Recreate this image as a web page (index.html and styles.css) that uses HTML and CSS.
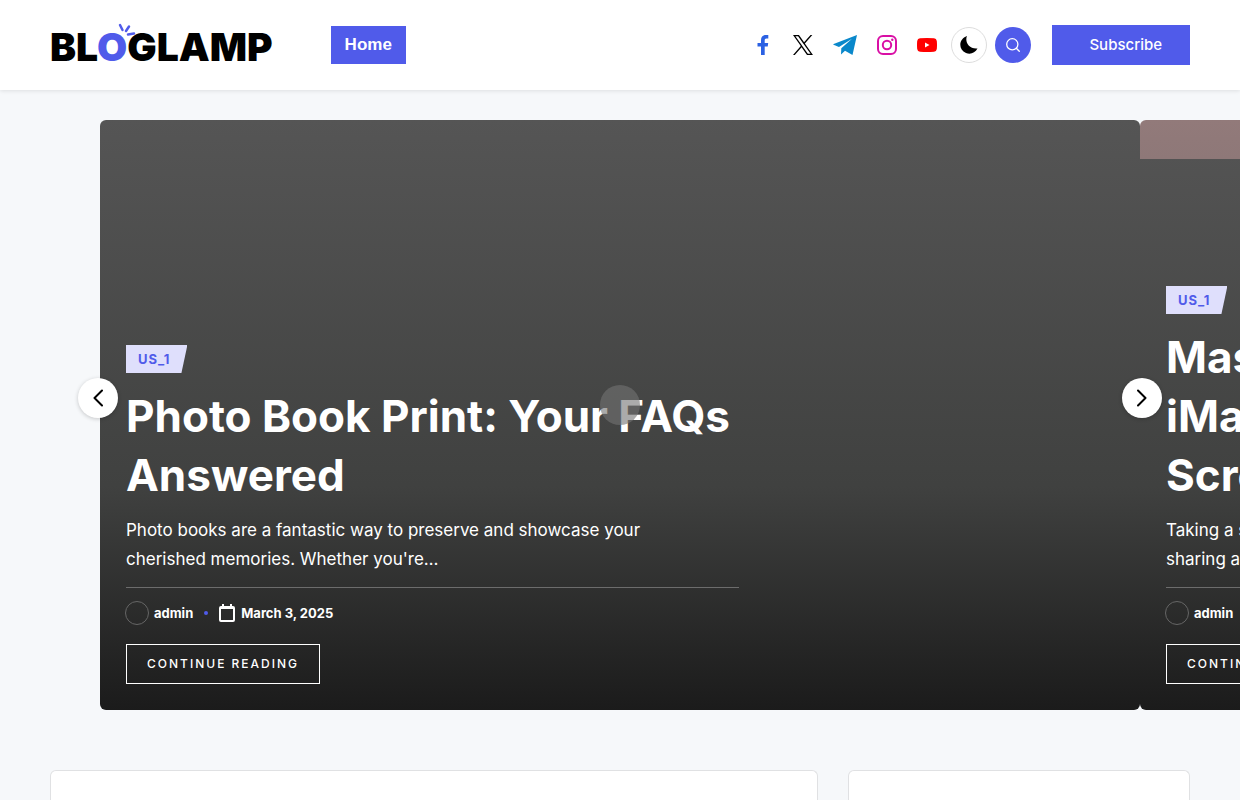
FILE: index.html
```html
<!DOCTYPE html>
<html lang="en">
<head>
    <meta charset="UTF-8">
    <meta name="viewport" content="width=device-width, initial-scale=1">
    <title>Bloglamp</title>
    <link rel="stylesheet" href="styles.css">
</head>
<body>
    <header class="site-header">
        <a class="logo" href="#" aria-label="Bloglamp">BL<span class="logo-o">O<svg class="logo-rays" viewBox="0 0 18 14" aria-hidden="true"><path d="M2 2L4.500 7M11 3.500L8 8M10 11.500L16 10.500"/></svg></span>GLAMP</a>
        <nav class="main-nav">
            <a class="nav-link" href="#">Home</a>
        </nav>
        <div class="header-widgets">
            <div class="socials">
                <a href="#" aria-label="Facebook"><svg width="20" height="20" viewBox="0 0 20 20" fill="#2b61e3"><path d="M8 20V11.500H4.500V8H8V5.500C8 2 9.800 0 13 0H15.300V3.500H13.500C12 3.500 11.700 4.200 11.700 5.500V8H15.200L14.700 11.500H11.700V20Z"/></svg></a>
                <a href="#" aria-label="X"><svg width="20" height="20" viewBox="0 0 24 24" fill="#000"><path d="M14.258 10.152L23.176 0h-2.113l-7.747 8.813L7.133 0H0l9.352 13.328L0 23.973h2.113l8.176-9.309 6.531 9.309h7.133zm-2.895 3.293l-.949-1.328L2.875 1.563h3.246l6.086 8.523.945 1.328 7.910 11.078h-3.246z"/></svg></a>
                <a href="#" aria-label="Telegram"><svg width="24" height="20" viewBox="0 0 24 20" fill="#0a88cb"><path d="M24 0L0 9.300C1.200 10.200 3.400 11 6 12L19 3.800L8.300 13.300L8 19.500L12 15.700L19.500 20Z"/></svg></a>
                <a href="#" aria-label="Instagram"><svg width="20" height="20" viewBox="0 0 20 20" fill="none" stroke="#d90fa5" stroke-width="2"><rect x="1" y="1" width="18" height="18" rx="5"/><circle cx="10" cy="10" r="4.200"/><circle cx="15.300" cy="4.700" r="1.200" fill="#d90fa5" stroke="none"/></svg></a>
                <a href="#" aria-label="YouTube"><svg width="20" height="20" viewBox="0 0 20 20"><path fill="#f00" d="M3 3.300Q10 2.700 17 3.300Q19.500 3.500 19.800 6Q20.200 10 19.800 14Q19.500 16.500 17 16.700Q10 17.300 3 16.700Q.5 16.500.2 14Q-.2 10 .2 6Q.5 3.500 3 3.300Z"/><path fill="#fff" d="M8 7.500V12.500L12.500 10Z"/></svg></a>
            </div>
            <button class="round-button theme-toggle" type="button" aria-label="Dark mode"><svg width="18" height="18" viewBox="0 0 18 18"><path d="M7 0C4.500 5.500 9 13.500 17.500 12.500C15 17 10.500 18.800 6 17C-2 13.500-1.500 3 7 0Z"/></svg></button>
            <button class="round-button search-button" type="button" aria-label="Search"><svg width="14" height="14" viewBox="0 0 14 14" fill="none" stroke="#fff" stroke-width="1.300" stroke-linecap="round"><circle cx="6.300" cy="6.300" r="5.600"/><path d="M10.300 10.300L13.300 13.300"/></svg></button>
            <a class="subscribe" href="#">Subscribe</a>
        </div>
    </header>

    <section class="hero">
        <div class="slides">
            <article class="slide">
                <div class="slide-content">
                    <a class="category" href="#">US_1</a>
                    <h2 class="slide-title"><a href="#">Photo Book Print: Your FAQs Answered</a></h2>
                    <p class="excerpt">Photo books are a fantastic way to preserve and showcase your<br>cherished memories. Whether you're…</p>
                    <div class="meta">
                        <span class="avatar"></span>
                        <a class="author" href="#">admin</a>
                        <span class="dot"></span>
                        <svg class="calendar" width="16" height="18" viewBox="0 0 16 18" aria-hidden="true"><rect x="1" y="3" width="14" height="14" rx="1" fill="none" stroke="#fff" stroke-width="2"/><path d="M1 3H15V5H1ZM3 0H5V3H3ZM11 0H13V3H11Z" fill="#fff"/></svg>
                        <time datetime="2025-03-03">March 3, 2025</time>
                    </div>
                    <a class="read-more" href="#">Continue Reading</a>
                </div>
            </article>
            <article class="slide slide-tinted">
                <div class="slide-content">
                    <a class="category" href="#">US_1</a>
                    <h2 class="slide-title"><a href="#">Mastering Your<br>iMac: How to Take<br>Screenshots</a></h2>
                    <p class="excerpt">Taking a screenshot on your iMac is a handy skill for<br>sharing and saving what you see…</p>
                    <div class="meta">
                        <span class="avatar"></span>
                        <a class="author" href="#">admin</a>
                    </div>
                    <a class="read-more" href="#">Continue Reading</a>
                </div>
            </article>
        </div>
        <button class="arrow arrow-prev" type="button" aria-label="Previous slide"><svg width="10" height="18" viewBox="0 0 10 18"><path d="M9 1.500L1.500 9L9 16.500"/></svg></button>
        <button class="arrow arrow-next" type="button" aria-label="Next slide"><svg width="10" height="18" viewBox="0 0 10 18"><path d="M1 1.500L8.500 9L1 16.500"/></svg></button>
        <span class="loader"></span>
    </section>

    <main class="content">
        <section class="panel"></section>
        <aside class="panel"></aside>
    </main>
</body>
</html>
```
FILE: styles.css
```css
* {
  box-sizing: border-box;
}

body {
  margin: 0;
  min-height: 100vh;
  display: flex;
  flex-direction: column;
  font-family: Inter, "Liberation Sans", sans-serif;
  background-color: #f6f8fa;
  color: #000;
}

a {
  color: inherit;
  text-decoration: none;
}

button {
  padding: 0;
  border: none;
  cursor: pointer;
}

svg {
  display: block;
}

.site-header {
  display: flex;
  align-items: center;
  height: 90px;
  padding: 0 50px;
  background-color: #fff;
  box-shadow: 0 1px 4px rgba(0, 0, 0, 0.1);
}

.logo {
  font-size: 39px;
  font-weight: 900;
  line-height: 40px;
  padding-top: 4px;
}

.logo-o {
  position: relative;
  color: #505bea;
}

.logo-rays {
  position: absolute;
  top: 0;
  right: -9px;
  width: 18px;
  height: 14px;
  fill: none;
  stroke: #505bea;
  stroke-width: 2.5;
  stroke-linecap: round;
}

.main-nav {
  margin-left: 58px;
}

.nav-link {
  display: block;
  padding: 0 14px;
  background-color: #505bea;
  color: #fff;
  font: bold 17px/38px "Liberation Sans", Arial, sans-serif;
}

.header-widgets {
  display: flex;
  align-items: center;
  gap: 8px;
  margin-left: auto;
}

.socials {
  display: flex;
  gap: 20px;
  margin-right: 6px;
}

.round-button {
  display: flex;
  align-items: center;
  justify-content: center;
  width: 36px;
  height: 36px;
  border-radius: 50%;
}

.theme-toggle {
  background-color: #fff;
  border: 1px solid #ddd;
}

.search-button {
  background-color: #505bea;
}

.subscribe {
  margin-left: 13px;
  padding: 0 28px 0 37px;
  background-color: #505bea;
  color: #fff;
  font-size: 15px;
  font-weight: 500;
  line-height: 40px;
}

.hero {
  position: relative;
  padding: 30px 0 60px;
  overflow: hidden;
}

.slides {
  display: flex;
  padding: 0 100px;
}

.slide {
  display: flex;
  flex: 0 0 100%;
  align-items: flex-end;
  height: 590px;
  padding: 26px;
  border-radius: 6px;
  background: linear-gradient(#555 0%, #404140 62%, #1b1b1b 100%);
  color: #fff;
}

.slide-tinted {
  background: linear-gradient(#927a7a, #8e7878) top / 100% 39px no-repeat,
    linear-gradient(#555 0%, #404140 62%, #1b1b1b 100%);
}

.slide-content {
  width: 62%;
}

.category {
  display: inline-block;
  padding: 0 17px 0 12px;
  background-color: #dfdffc;
  clip-path: polygon(0 0, 100% 0, calc(100% - 6px) 100%, 0 100%);
  color: #505bea;
  font-size: 13px;
  font-weight: 700;
  line-height: 28px;
  letter-spacing: 1px;
  vertical-align: top;
}

.slide-title {
  margin: 14px 0 11px;
  font-size: 44px;
  font-weight: 700;
  line-height: 59px;
}

.excerpt {
  margin: 0;
  padding-bottom: 13px;
  border-bottom: 1px solid #6c6c6c;
  font-size: 17px;
  line-height: 29px;
}

.meta {
  display: flex;
  align-items: center;
  margin: 13px 0 19px;
  font-size: 13px;
  font-weight: 700;
  line-height: 24px;
}

.avatar {
  width: 24px;
  height: 24px;
  margin: 0 5px 0 -1px;
  border: 1px solid #666;
  border-radius: 50%;
}

.dot {
  width: 4px;
  height: 4px;
  margin: 0 11px;
  border-radius: 50%;
  background-color: #505bea;
}

.calendar {
  margin-right: 6px;
}

.read-more {
  display: inline-block;
  padding: 0 20px;
  border: 1px solid #fff;
  font-size: 12px;
  font-weight: 500;
  line-height: 38px;
  letter-spacing: 2px;
  text-transform: uppercase;
  vertical-align: top;
}

.arrow {
  position: absolute;
  top: 288px;
  display: flex;
  align-items: center;
  justify-content: center;
  width: 40px;
  height: 40px;
  border-radius: 50%;
  background-color: #fff;
  box-shadow: 0 1px 4px rgba(0, 0, 0, 0.2);
}

.arrow svg {
  fill: none;
  stroke: #000;
  stroke-width: 2;
  stroke-linecap: round;
  stroke-linejoin: round;
}

.arrow-prev {
  left: 78px;
}

.arrow-next {
  right: 78px;
}

.loader {
  position: absolute;
  top: 295px;
  left: calc(50% - 20px);
  width: 40px;
  height: 40px;
  border-radius: 50%;
  background-color: rgba(115, 115, 115, 0.6);
}

.content {
  display: grid;
  flex: 1;
  grid-template-columns: 9fr 4fr;
  gap: 30px;
  padding: 0 50px;
}

.panel {
  border: 1px solid #e0e1e3;
  border-bottom: none;
  border-radius: 6px 6px 0 0;
  background-color: #fff;
}
```
